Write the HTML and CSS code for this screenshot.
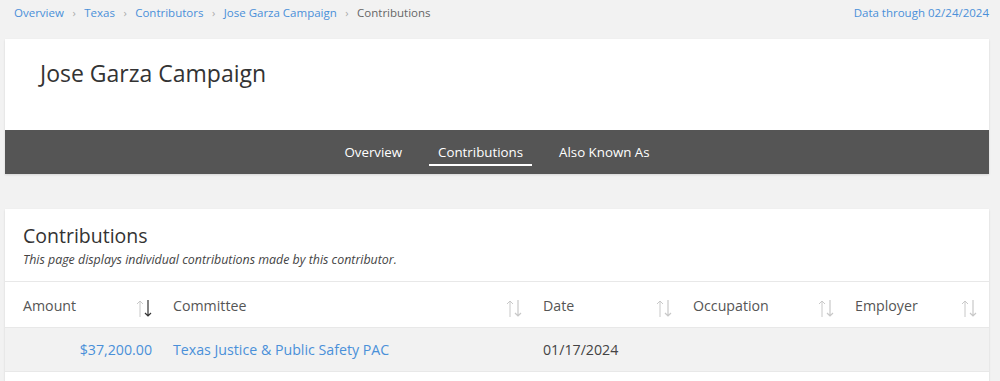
FILE: index.html
```html
<!DOCTYPE html>
<html lang="en">
<head>
  <meta charset="UTF-8">
  <meta name="viewport" content="width=device-width, initial-scale=1.0">
  <title>Jose Garza Campaign - Contributions</title>
  <link rel="stylesheet" href="styles.css">
</head>
<body>
  <!-- Breadcrumbs -->
  <div class="topbar">
    <div class="crumbs">
      <a href="#">Overview</a><span class="sep">›</span>
      <a href="#">Texas</a><span class="sep">›</span>
      <a href="#">Contributors</a><span class="sep">›</span>
      <a href="#">Jose Garza Campaign</a><span class="sep">›</span>
      <span class="current">Contributions</span>
    </div>
    <a class="data-through" href="#">Data through 02/24/2024</a>
  </div>

  <!-- Header card -->
  <div class="card header-card">
    <h1>Jose Garza Campaign</h1>
    <nav class="tabs">
      <a href="#">Overview</a>
      <a href="#" class="active">Contributions</a>
      <a href="#">Also Known As</a>
    </nav>
  </div>

  <!-- Contributions card -->
  <div class="card list-card">
    <div class="card-head">
      <h2>Contributions</h2>
      <p>This page displays individual contributions made by this contributor.</p>
    </div>
    <table class="grid">
      <colgroup>
        <col style="width:153px">
        <col style="width:370px">
        <col style="width:150px">
        <col style="width:162px">
        <col>
      </colgroup>
      <thead>
        <tr>
          <th class="sorted">Amount</th>
          <th>Committee</th>
          <th>Date</th>
          <th>Occupation</th>
          <th class="last">Employer</th>
        </tr>
      </thead>
      <tbody>
        <tr>
          <td class="num"><a href="#">$37,200.00</a></td>
          <td><a href="#">Texas Justice &amp; Public Safety PAC</a></td>
          <td>01/17/2024</td>
          <td></td>
          <td></td>
        </tr>
      </tbody>
    </table>
  </div>

  <script>
    // add the sort arrows to every header cell
    document.querySelectorAll('.grid th').forEach(function (th) {
      const down = th.classList.contains('sorted') ? '#333' : '#c8c8c8';
      const icon = document.createElement('span');
      icon.className = 'sort';
      icon.innerHTML =
        '<svg width="16" height="19" viewBox="0 0 16 19">' +
        '<path d="M4 18V2M1 5l3-3 3 3" fill="none" stroke="#c8c8c8" stroke-width="1"/>' +
        '<path d="M12 1v16M9 14l3 3 3-3" fill="none" stroke="' + down + '" stroke-width="1.2"/>' +
        '</svg>';
      th.appendChild(icon);
    });
  </script>
</body>
</html>
```

FILE: styles.css
```css
body {
  font-family: "Open Sans", "Liberation Sans", sans-serif;
  margin: 0;
  padding: 0 11px 20px 5px;
  background-color: #f2f2f2;
  color: #333;
}
a {
  color: #4a90d9;
  text-decoration: none;
}
.topbar {
  display: flex;
  justify-content: space-between;
  align-items: center;
  height: 24px;
  padding: 0 0 0 9px;
  font-size: 11.5px;
}
.crumbs .sep {
  color: #aaa;
  font-size: 11px;
  margin: 0 5.5px 0 8.5px;
}
.crumbs .current {
  color: #666;
}
.card {
  background: #fff;
  box-shadow: 0 1px 2px rgba(0, 0, 0, 0.12);
}
.header-card {
  margin-top: 15px;
}
.header-card h1 {
  margin: 0;
  padding: 18px 35px 0;
  height: 91px;
  box-sizing: border-box;
  font-size: 23px;
  font-weight: 400;
  color: #333;
}
.tabs {
  display: flex;
  justify-content: center;
  align-items: center;
  height: 44px;
  background: #555;
}
.tabs a {
  color: #fff;
  font-size: 13.3px;
  margin: 4px 9px 0;
  padding: 0 9px 2px;
  line-height: 20px;
  border-bottom: 2px solid transparent;
}
.tabs a.active {
  border-bottom-color: #fff;
}
.list-card {
  margin-top: 35px;
  padding-bottom: 20px;
}
.card-head {
  padding: 14px 18px 13px;
  border-bottom: 1px solid #e8e8e8;
}
.card-head h2 {
  margin: 0;
  font-size: 19.5px;
  font-weight: 400;
  line-height: 26px;
}
.card-head p {
  margin: 2px 0 0;
  font-size: 12.4px;
  font-style: italic;
  color: #444;
}
.grid {
  width: 100%;
  border-collapse: collapse;
  table-layout: fixed;
  font-size: 14.2px;
}
.grid th {
  position: relative;
  text-align: left;
  font-weight: 400;
  color: #555;
  height: 45px;
  padding: 3px 15px 0;
  box-sizing: border-box;
}
.grid th:first-child, .grid td:first-child {
  padding-left: 18px;
}
.grid th .sort {
  position: absolute;
  right: 6px;
  top: 17px;
  line-height: 0;
}
.grid th.last .sort {
  right: 12px;
}
.grid td {
  height: 43px;
  padding: 0 15px;
  background: #f2f2f2;
  border-top: 1px solid #e8e8e8;
  border-bottom: 1px solid #e8e8e8;
  color: #444;
}
.grid td.num {
  text-align: right;
  padding-right: 6px;
}
```
